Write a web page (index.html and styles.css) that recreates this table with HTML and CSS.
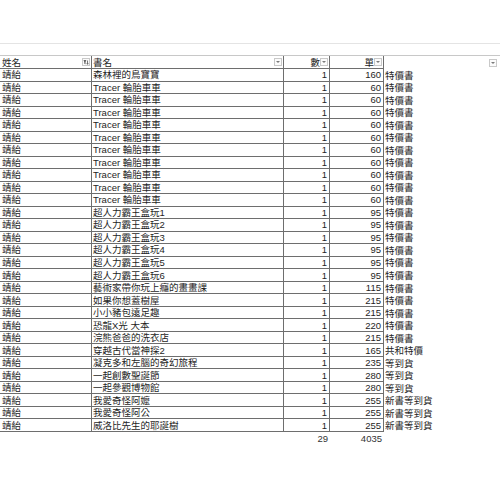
FILE: index.html
```html
<!DOCTYPE html>
<html>
<head>
<meta charset="utf-8">
<link rel="stylesheet" href="styles.css">
</head>
<body>
<div class="topband"></div>
<div class="sheet">
  <div class="row head">
    <div class="c c1"><span>姓名</span><span class="fbtn fapplied"><svg width="7" height="7" viewBox="0 0 7 7"><path d="M0.5 1h3.5L2.8 2.6V5.5L1.7 5V2.6z" fill="#333"/><path d="M5.3 1.2v4.3M4.4 4.6l0.9 1 0.9-1" stroke="#333" stroke-width="0.8" fill="none"/></svg></span></div>
    <div class="c c2"><span>書名</span><span class="fbtn"><i></i></span></div>
    <div class="c c3 r"><span>數</span><span class="fbtn"><i></i></span></div>
    <div class="c c4 r"><span>單</span><span class="fbtn"><i></i></span></div>
    <div class="c c5"><span class="fbtn"><i></i></span></div>
  </div>
  <div class="row"><div class="c c1">靖紿</div><div class="c c2">森林裡的鳥寶寶</div><div class="c c3 r">1</div><div class="c c4 r">160</div><div class="c c5">特價書</div></div>
  <div class="row"><div class="c c1">靖紿</div><div class="c c2">Tracer 輪胎車車</div><div class="c c3 r">1</div><div class="c c4 r">60</div><div class="c c5">特價書</div></div>
  <div class="row"><div class="c c1">靖紿</div><div class="c c2">Tracer 輪胎車車</div><div class="c c3 r">1</div><div class="c c4 r">60</div><div class="c c5">特價書</div></div>
  <div class="row"><div class="c c1">靖紿</div><div class="c c2">Tracer 輪胎車車</div><div class="c c3 r">1</div><div class="c c4 r">60</div><div class="c c5">特價書</div></div>
  <div class="row"><div class="c c1">靖紿</div><div class="c c2">Tracer 輪胎車車</div><div class="c c3 r">1</div><div class="c c4 r">60</div><div class="c c5">特價書</div></div>
  <div class="row"><div class="c c1">靖紿</div><div class="c c2">Tracer 輪胎車車</div><div class="c c3 r">1</div><div class="c c4 r">60</div><div class="c c5">特價書</div></div>
  <div class="row"><div class="c c1">靖紿</div><div class="c c2">Tracer 輪胎車車</div><div class="c c3 r">1</div><div class="c c4 r">60</div><div class="c c5">特價書</div></div>
  <div class="row"><div class="c c1">靖紿</div><div class="c c2">Tracer 輪胎車車</div><div class="c c3 r">1</div><div class="c c4 r">60</div><div class="c c5">特價書</div></div>
  <div class="row"><div class="c c1">靖紿</div><div class="c c2">Tracer 輪胎車車</div><div class="c c3 r">1</div><div class="c c4 r">60</div><div class="c c5">特價書</div></div>
  <div class="row"><div class="c c1">靖紿</div><div class="c c2">Tracer 輪胎車車</div><div class="c c3 r">1</div><div class="c c4 r">60</div><div class="c c5">特價書</div></div>
  <div class="row"><div class="c c1">靖紿</div><div class="c c2">Tracer 輪胎車車</div><div class="c c3 r">1</div><div class="c c4 r">60</div><div class="c c5">特價書</div></div>
  <div class="row"><div class="c c1">靖紿</div><div class="c c2">超人力霸王盒玩1</div><div class="c c3 r">1</div><div class="c c4 r">95</div><div class="c c5">特價書</div></div>
  <div class="row"><div class="c c1">靖紿</div><div class="c c2">超人力霸王盒玩2</div><div class="c c3 r">1</div><div class="c c4 r">95</div><div class="c c5">特價書</div></div>
  <div class="row"><div class="c c1">靖紿</div><div class="c c2">超人力霸王盒玩3</div><div class="c c3 r">1</div><div class="c c4 r">95</div><div class="c c5">特價書</div></div>
  <div class="row"><div class="c c1">靖紿</div><div class="c c2">超人力霸王盒玩4</div><div class="c c3 r">1</div><div class="c c4 r">95</div><div class="c c5">特價書</div></div>
  <div class="row"><div class="c c1">靖紿</div><div class="c c2">超人力霸王盒玩5</div><div class="c c3 r">1</div><div class="c c4 r">95</div><div class="c c5">特價書</div></div>
  <div class="row"><div class="c c1">靖紿</div><div class="c c2">超人力霸王盒玩6</div><div class="c c3 r">1</div><div class="c c4 r">95</div><div class="c c5">特價書</div></div>
  <div class="row"><div class="c c1">靖紿</div><div class="c c2">藝術家帶你玩上癮的畫畫課</div><div class="c c3 r">1</div><div class="c c4 r">115</div><div class="c c5">特價書</div></div>
  <div class="row"><div class="c c1">靖紿</div><div class="c c2">如果你想蓋樹屋</div><div class="c c3 r">1</div><div class="c c4 r">215</div><div class="c c5">特價書</div></div>
  <div class="row"><div class="c c1">靖紿</div><div class="c c2">小小豬包遠足趣</div><div class="c c3 r">1</div><div class="c c4 r">215</div><div class="c c5">特價書</div></div>
  <div class="row"><div class="c c1">靖紿</div><div class="c c2">恐龍X光 大本</div><div class="c c3 r">1</div><div class="c c4 r">220</div><div class="c c5">特價書</div></div>
  <div class="row"><div class="c c1">靖紿</div><div class="c c2">浣熊爸爸的洗衣店</div><div class="c c3 r">1</div><div class="c c4 r">215</div><div class="c c5">特價書</div></div>
  <div class="row"><div class="c c1">靖紿</div><div class="c c2">穿越古代當神探2</div><div class="c c3 r">1</div><div class="c c4 r">165</div><div class="c c5">共和特價</div></div>
  <div class="row"><div class="c c1">靖紿</div><div class="c c2">凝克多和左腦的奇幻旅程</div><div class="c c3 r">1</div><div class="c c4 r">235</div><div class="c c5">等到貨</div></div>
  <div class="row"><div class="c c1">靖紿</div><div class="c c2">一起創數聖誕節</div><div class="c c3 r">1</div><div class="c c4 r">280</div><div class="c c5">等到貨</div></div>
  <div class="row"><div class="c c1">靖紿</div><div class="c c2">一起參觀博物館</div><div class="c c3 r">1</div><div class="c c4 r">280</div><div class="c c5">等到貨</div></div>
  <div class="row"><div class="c c1">靖紿</div><div class="c c2">我愛奇怪阿嬤</div><div class="c c3 r">1</div><div class="c c4 r">255</div><div class="c c5">新書等到貨</div></div>
  <div class="row"><div class="c c1">靖紿</div><div class="c c2">我愛奇怪阿公</div><div class="c c3 r">1</div><div class="c c4 r">255</div><div class="c c5">新書等到貨</div></div>
  <div class="row"><div class="c c1">靖紿</div><div class="c c2">威洛比先生的耶誕樹</div><div class="c c3 r">1</div><div class="c c4 r">255</div><div class="c c5">新書等到貨</div></div>
  <div class="row total"><div class="c c1"></div><div class="c c2"></div><div class="c c3 r">29</div><div class="c c4 r">4035</div><div class="c c5"></div></div>
</div>
</body>
</html>
```
FILE: styles.css
```css
html, body {
  margin: 0;
  padding: 0;
  background: #ffffff;
}
body {
  font-family: "Liberation Sans", "Noto Sans CJK TC", sans-serif;
  font-size: 9.5px;
  color: #1e1e1e;
}
.topband {
  height: 43px;
  border-bottom: 1px solid #e4e4e4;
  margin-bottom: 11px;
}
.sheet {
  width: 500px;
}
.row {
  display: grid;
  grid-template-columns: 92px 192px 46px 54px 116px;
  height: 12.52px;
  box-sizing: border-box;
}
.row.head {
  height: 14px;
  border-top: 1px solid #c8c8c8;
}
.c {
  box-sizing: border-box;
  border-bottom: 1px solid #6e6e6e;
  border-right: 1px solid #6e6e6e;
  line-height: 11px;
  white-space: nowrap;
  overflow: hidden;
  padding: 0 2px 0 2px;
  display: flex;
  align-items: center;
}
.c2 { padding-left: 1px; }
.c.r { justify-content: flex-end; }
.c5 {
  border: none;
  padding-left: 1px;
}
.head .c {
  justify-content: space-between;
  padding-right: 0;
}
.head .c.r {
  justify-content: flex-end;
}
.head .c5 {
  justify-content: flex-end;
  padding-right: 2px;
}
.fbtn {
  width: 8px;
  height: 8px;
  box-sizing: border-box;
  border: 1px solid #c9c9c9;
  background: #fbfbfb;
  display: flex;
  align-items: center;
  justify-content: center;
  margin-right: 1px;
}
.fbtn i {
  width: 0;
  height: 0;
  border-left: 2px solid transparent;
  border-right: 2px solid transparent;
  border-top: 2px solid #7a7a7a;
}
.fapplied svg { display: block; }
.total .c {
  border: none;
  color: #333;
}
```
